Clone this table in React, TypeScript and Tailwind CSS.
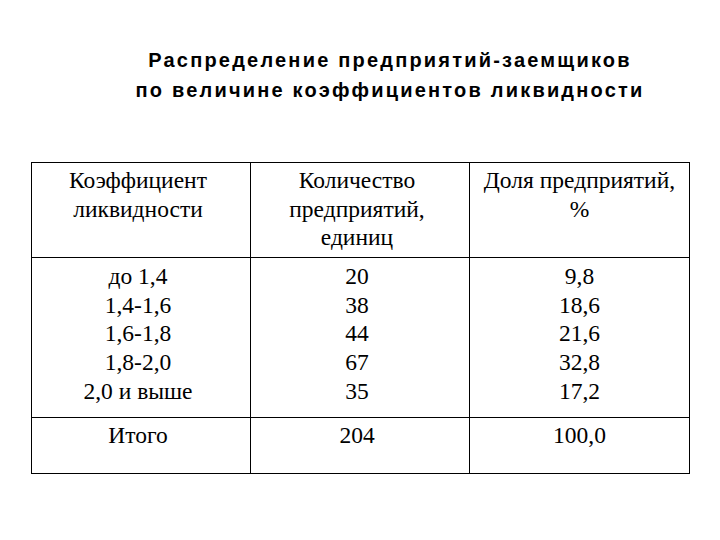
import React from "react";

const rows = [
  ["до 1,4", "20", "9,8"],
  ["1,4-1,6", "38", "18,6"],
  ["1,6-1,8", "44", "21,6"],
  ["1,8-2,0", "67", "32,8"],
  ["2,0 и выше", "35", "17,2"],
];

export default function App() {
  return (
    <div className="w-[720px] h-[540px] bg-white overflow-hidden text-black">
      <div className="pt-[45px] pl-[60px] text-center font-bold text-[20px] leading-[30px] tracking-[2.2px] font-['Liberation_Sans']">
        <div>Распределение предприятий-заемщиков</div>
        <div>по величине коэффициентов ликвидности</div>
      </div>
      <div className="mt-[57px] ml-[31px] w-[659px] border border-black grid grid-cols-[219px_219px_219px] text-center text-[23.5px] leading-[28.7px] font-['Liberation_Serif']">
        <div className="h-[95px] border-r border-b border-black pt-[3px] pr-[6px]">
          <div>Коэффициент</div>
          <div>ликвидности</div>
        </div>
        <div className="h-[95px] border-r border-b border-black pt-[3px] pr-[6px]">
          <div>Количество</div>
          <div>предприятий,</div>
          <div>единиц</div>
        </div>
        <div className="h-[95px] border-b border-black pt-[3px]">
          <div>Доля предприятий,</div>
          <div>%</div>
        </div>
        <div className="h-[160px] border-r border-b border-black pt-[4px] pr-[6px]">
          {rows.map((r) => (
            <div key={r[0]}>{r[0]}</div>
          ))}
        </div>
        <div className="h-[160px] border-r border-b border-black pt-[4px] pr-[6px]">
          {rows.map((r) => (
            <div key={r[0]}>{r[1]}</div>
          ))}
        </div>
        <div className="h-[160px] border-b border-black pt-[4px]">
          {rows.map((r) => (
            <div key={r[0]}>{r[2]}</div>
          ))}
        </div>
        <div className="h-[55px] border-r border-black pt-[3px] pr-[6px]">Итого</div>
        <div className="h-[55px] border-r border-black pt-[3px] pr-[6px]">204</div>
        <div className="h-[55px] pt-[3px]">100,0</div>
      </div>
    </div>
  );
}
